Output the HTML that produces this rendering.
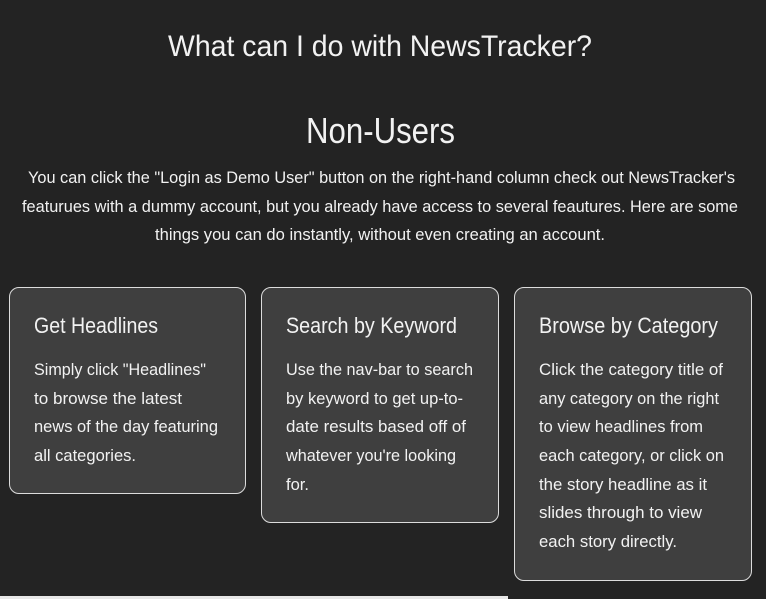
<!DOCTYPE html>
<html><head><meta charset="utf-8"><style>
html,body{margin:0;padding:0;background:#232323;width:766px;height:599px;overflow:hidden}
.c{position:absolute;background:#3f3f3f;border:1.5px solid #dcdcdc;border-radius:10px;box-sizing:border-box}
svg{position:absolute;left:0;top:0}
text{font-family:"Liberation Sans",sans-serif;fill:#f2f2f2}
</style></head><body>
<div class="c" style="left:9px;top:287px;width:237px;height:207px"></div>
<div class="c" style="left:261px;top:287px;width:238px;height:236px"></div>
<div class="c" style="left:514px;top:287px;width:238px;height:294px"></div>
<div style="position:absolute;left:0;top:596px;width:508px;height:3px;background:#e8e8e8"></div>
<svg width="766" height="599" xmlns="http://www.w3.org/2000/svg">
<g lengthAdjust="spacingAndGlyphs">
<text x="168" y="56" font-size="30" textLength="424" lengthAdjust="spacingAndGlyphs">What can I do with NewsTracker?</text>
<text x="306" y="143" font-size="36" textLength="149" lengthAdjust="spacingAndGlyphs">Non-Users</text>
<text x="28" y="183" font-size="17" textLength="707" lengthAdjust="spacingAndGlyphs">You can click the "Login as Demo User" button on the right-hand column check out NewsTracker's</text>
<text x="22" y="212" font-size="17" textLength="716" lengthAdjust="spacingAndGlyphs">featurues with a dummy account, but you already have access to several feautures. Here are some</text>
<text x="155" y="240" font-size="17" textLength="450" lengthAdjust="spacingAndGlyphs">things you can do instantly, without even creating an account.</text>

<text x="34" y="333" font-size="22" textLength="124" lengthAdjust="spacingAndGlyphs">Get Headlines</text>
<text x="34" y="375" font-size="17" textLength="172" lengthAdjust="spacingAndGlyphs">Simply click "Headlines"</text>
<text x="34" y="404" font-size="17" textLength="148" lengthAdjust="spacingAndGlyphs">to browse the latest</text>
<text x="34" y="432" font-size="17" textLength="184" lengthAdjust="spacingAndGlyphs">news of the day featuring</text>
<text x="34" y="461" font-size="17" textLength="102" lengthAdjust="spacingAndGlyphs">all categories.</text>

<text x="286" y="333" font-size="22" textLength="171" lengthAdjust="spacingAndGlyphs">Search by Keyword</text>
<text x="286" y="375" font-size="17" textLength="187" lengthAdjust="spacingAndGlyphs">Use the nav-bar to search</text>
<text x="286" y="404" font-size="17" textLength="177" lengthAdjust="spacingAndGlyphs">by keyword to get up-to-</text>
<text x="286" y="432" font-size="17" textLength="180" lengthAdjust="spacingAndGlyphs">date results based off of</text>
<text x="286" y="461" font-size="17" textLength="170" lengthAdjust="spacingAndGlyphs">whatever you're looking</text>
<text x="286" y="490" font-size="17" textLength="23" lengthAdjust="spacingAndGlyphs">for.</text>

<text x="539" y="333" font-size="22" textLength="179" lengthAdjust="spacingAndGlyphs">Browse by Category</text>
<text x="539" y="375" font-size="17" textLength="184" lengthAdjust="spacingAndGlyphs">Click the category title of</text>
<text x="539" y="404" font-size="17" textLength="180" lengthAdjust="spacingAndGlyphs">any category on the right</text>
<text x="539" y="432" font-size="17" textLength="164" lengthAdjust="spacingAndGlyphs">to view headlines from</text>
<text x="539" y="461" font-size="17" textLength="185" lengthAdjust="spacingAndGlyphs">each category, or click on</text>
<text x="539" y="490" font-size="17" textLength="168" lengthAdjust="spacingAndGlyphs">the story headline as it</text>
<text x="539" y="518" font-size="17" textLength="163" lengthAdjust="spacingAndGlyphs">slides through to view</text>
<text x="539" y="547" font-size="17" textLength="138" lengthAdjust="spacingAndGlyphs">each story directly.</text>
</g>
</svg>
</body></html>
